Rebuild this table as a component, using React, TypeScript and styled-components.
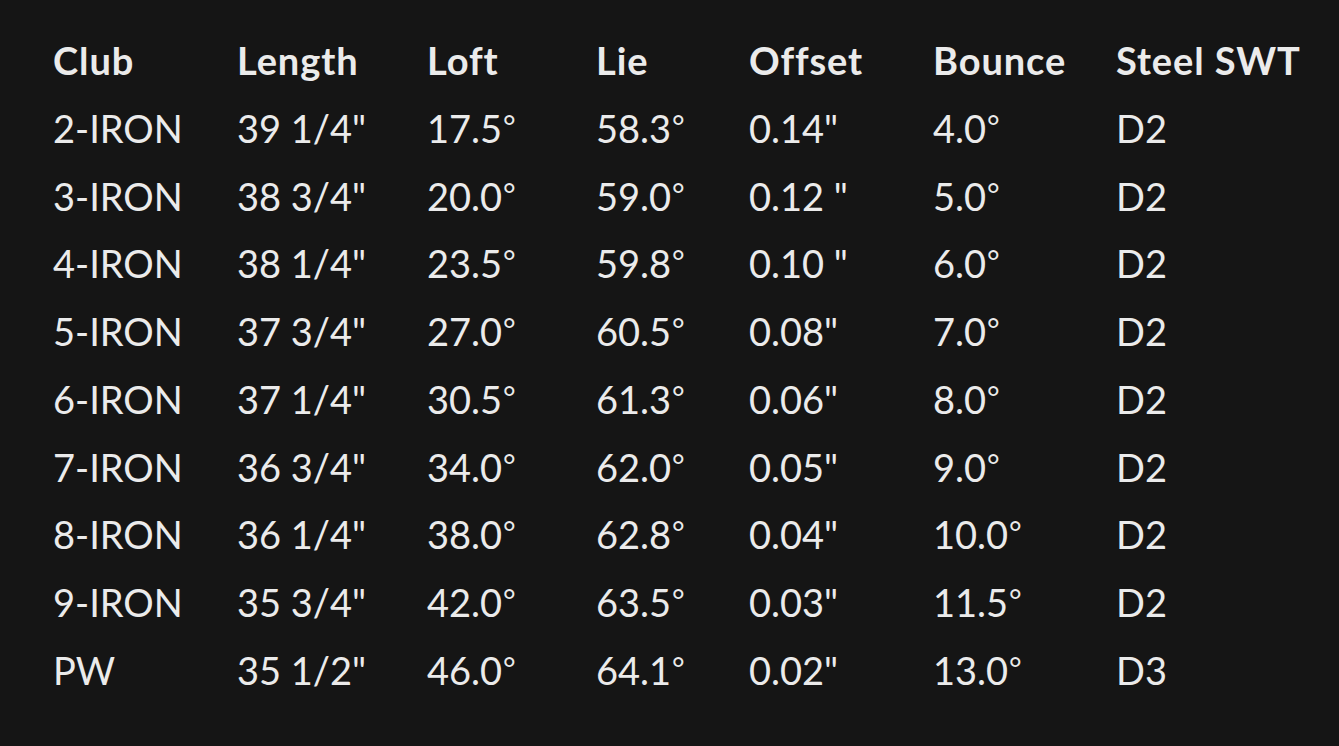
import React from "react";
import styled, { createGlobalStyle } from "styled-components";

const Global = createGlobalStyle`
  html, body { margin: 0; padding: 0; background: #151515; }
  body { font-family: Lato, "Open Sans", sans-serif; color: #ebebeb; }
`;

const Page = styled.div`
  padding: 27px 0 0 53px;
  min-height: 746px;
  box-sizing: border-box;
  background: #151515;
`;

const Table = styled.table`
  border-collapse: collapse;
  font-size: 38px;
`;

const HeadCell = styled.th<{ $w?: number }>`
  text-align: left;
  font-weight: 700;
  padding: 0;
  line-height: 67.75px;
  letter-spacing: 0.9px;
  width: ${(p) => (p.$w ? `${p.$w}px` : "auto")};
  white-space: nowrap;
`;

const Cell = styled.td`
  padding: 0;
  height: 67.75px;
  line-height: 67.75px;
  font-weight: 400;
  white-space: nowrap;
`;

const Deg = styled.span`
  font-size: 0.8em;
  line-height: 0;
  font-weight: 400;
  position: relative;
  top: -5px;
  margin-left: 1px;
`;

const widths = [184, 190, 169, 153, 184, 183, 0];
const headers = ["Club", "Length", "Loft", "Lie", "Offset", "Bounce", "Steel SWT"];

const rows = [
  ["2-IRON", "39 1/4\"", "17.5°", "58.3°", "0.14\"", "4.0°", "D2"],
  ["3-IRON", "38 3/4\"", "20.0°", "59.0°", "0.12 \"", "5.0°", "D2"],
  ["4-IRON", "38 1/4\"", "23.5°", "59.8°", "0.10 \"", "6.0°", "D2"],
  ["5-IRON", "37 3/4\"", "27.0°", "60.5°", "0.08\"", "7.0°", "D2"],
  ["6-IRON", "37 1/4\"", "30.5°", "61.3°", "0.06\"", "8.0°", "D2"],
  ["7-IRON", "36 3/4\"", "34.0°", "62.0°", "0.05\"", "9.0°", "D2"],
  ["8-IRON", "36 1/4\"", "38.0°", "62.8°", "0.04\"", "10.0°", "D2"],
  ["9-IRON", "35 3/4\"", "42.0°", "63.5°", "0.03\"", "11.5°", "D2"],
  ["PW", "35 1/2\"", "46.0°", "64.1°", "0.02\"", "13.0°", "D3"],
];

function renderValue(v: string) {
  if (v.endsWith("°")) {
    return (
      <>
        {v.slice(0, -1)}
        <Deg>°</Deg>
      </>
    );
  }
  return v;
}

export default function App() {
  return (
    <>
      <Global />
      <Page>
        <Table>
          <thead>
            <tr>
              {headers.map((h, i) => (
                <HeadCell key={h} $w={widths[i] || undefined}>
                  {h}
                </HeadCell>
              ))}
            </tr>
          </thead>
          <tbody>
            {rows.map((r) => (
              <tr key={r[0]}>
                {r.map((c, i) => (
                  <Cell key={i}>{renderValue(c)}</Cell>
                ))}
              </tr>
            ))}
          </tbody>
        </Table>
      </Page>
    </>
  );
}
